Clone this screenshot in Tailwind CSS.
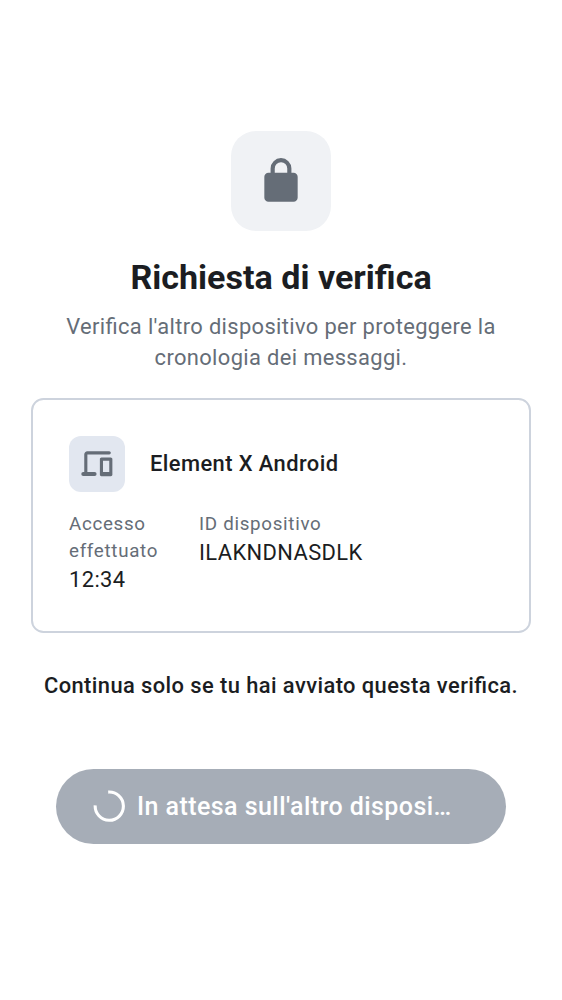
<!DOCTYPE html>
<html lang="it"><head><meta charset="utf-8"><title>Richiesta di verifica</title>
<script src="https://cdn.jsdelivr.net/npm/@tailwindcss/browser@4"></script></head>
<body class="bg-white font-['Roboto',sans-serif] text-[#1b1d22] [font-feature-settings:'liga'_1]">
<main class="w-[562px] h-[1000px] overflow-hidden flex flex-col items-center pt-[131px]">
<div class="size-[100px] rounded-[25px] bg-[#f0f2f5] flex items-center justify-center shrink-0">
<svg class="size-[50px]" viewBox="0 0 24 24" fill="#656d77"><path d="M6 22q-.824 0-1.412-.587A1.93 1.93 0 0 1 4 20V10q0-.825.588-1.412A1.93 1.93 0 0 1 6 8h1V6q0-2.075 1.463-3.537Q9.926 1 12 1q2.075 0 3.537 1.463Q17 3.925 17 6v2h1q.824 0 1.413.588Q20 9.175 20 10v10q0 .824-.587 1.413A1.93 1.93 0 0 1 18 22zM9 8h6V6q0-1.25-.875-2.125A2.9 2.9 0 0 0 12 3q-1.25 0-2.125.875A2.9 2.9 0 0 0 9 6z"/></svg>
</div>
<h1 class="mt-[24px] h-[44px] leading-[44px] text-[34.1px] font-bold whitespace-nowrap">Richiesta di verifica</h1>
<p class="mt-[12px] text-center text-[21.9px] leading-[31.25px] tracking-[0.36px] text-[#656d77] whitespace-nowrap">Verifica l'altro dispositivo per proteggere la<br>cronologia dei messaggi.</p>
<section class="mt-[24px] w-[500px] h-[235px] shrink-0 rounded-[12.5px] border-2 border-[#cdd3dd] px-9 pt-[36px]">
<div class="flex items-center gap-[25px]">
<div class="size-14 rounded-[12px] bg-[#e2e7f0] flex items-center justify-center"><svg class="size-[37.5px]" viewBox="0 0 24 24" fill="#656d77"><path d="M3.4 19.8a1.3 1.3 0 0 1 0-2.6H4V6q0-.824.588-1.412A1.93 1.93 0 0 1 6 4h14q.424 0 .712.287Q21 4.576 21 5t-.288.713A.97.97 0 0 1 20 6H6v11.2h4.6a1.3 1.3 0 0 1 0 2.6zM15 20a.97.97 0 0 1-.713-.288A.97.97 0 0 1 14 19V9q0-.424.287-.713A.97.97 0 0 1 15 8h6q.424 0 .712.287Q22 8.576 22 9v10q0 .424-.288.712A.97.97 0 0 1 21 20zm1-2.7h4V10h-4z"/></svg></div>
<h2 class="mt-px text-[21.9px] font-medium tracking-[0.42px]">Element X Android</h2></div>
<div class="flex gap-10 mt-[19px]">
<div class="w-[90px]"><div class="text-[18.75px] leading-[27px] tracking-[0.7px] text-[#656d77]">Accesso<br>effettuato</div><div class="-mt-px text-[21.9px] leading-[31px] tracking-[0.39px]">12:34</div></div>
<div><div class="text-[18.75px] leading-[27px] tracking-[0.7px] text-[#656d77]">ID dispositivo</div><div class="-mt-px text-[21.9px] leading-[31px] tracking-[0.39px]">ILAKNDNASDLK</div></div>
</div></section>
<p class="mt-[37px] text-[21.9px] leading-[31px] font-medium tracking-[0.42px] whitespace-nowrap">Continua solo se tu hai avviato questa verifica.</p>
<button class="mt-[68px] w-[450px] h-[75px] shrink-0 rounded-full bg-[#a6adb7] text-white flex items-center pl-[37px]">
<svg class="size-8 shrink-0" viewBox="0 0 32 32" fill="none" stroke="white" stroke-width="3.1"><path d="M15.2 2.1A14.1 14.1 0 1 1 2.2 15.3"/></svg>
<span class="ml-3 mt-0.5 text-[25px] font-medium tracking-[0.44px] whitespace-nowrap">In attesa sull'altro disposi…</span></button>
</main></body></html>
